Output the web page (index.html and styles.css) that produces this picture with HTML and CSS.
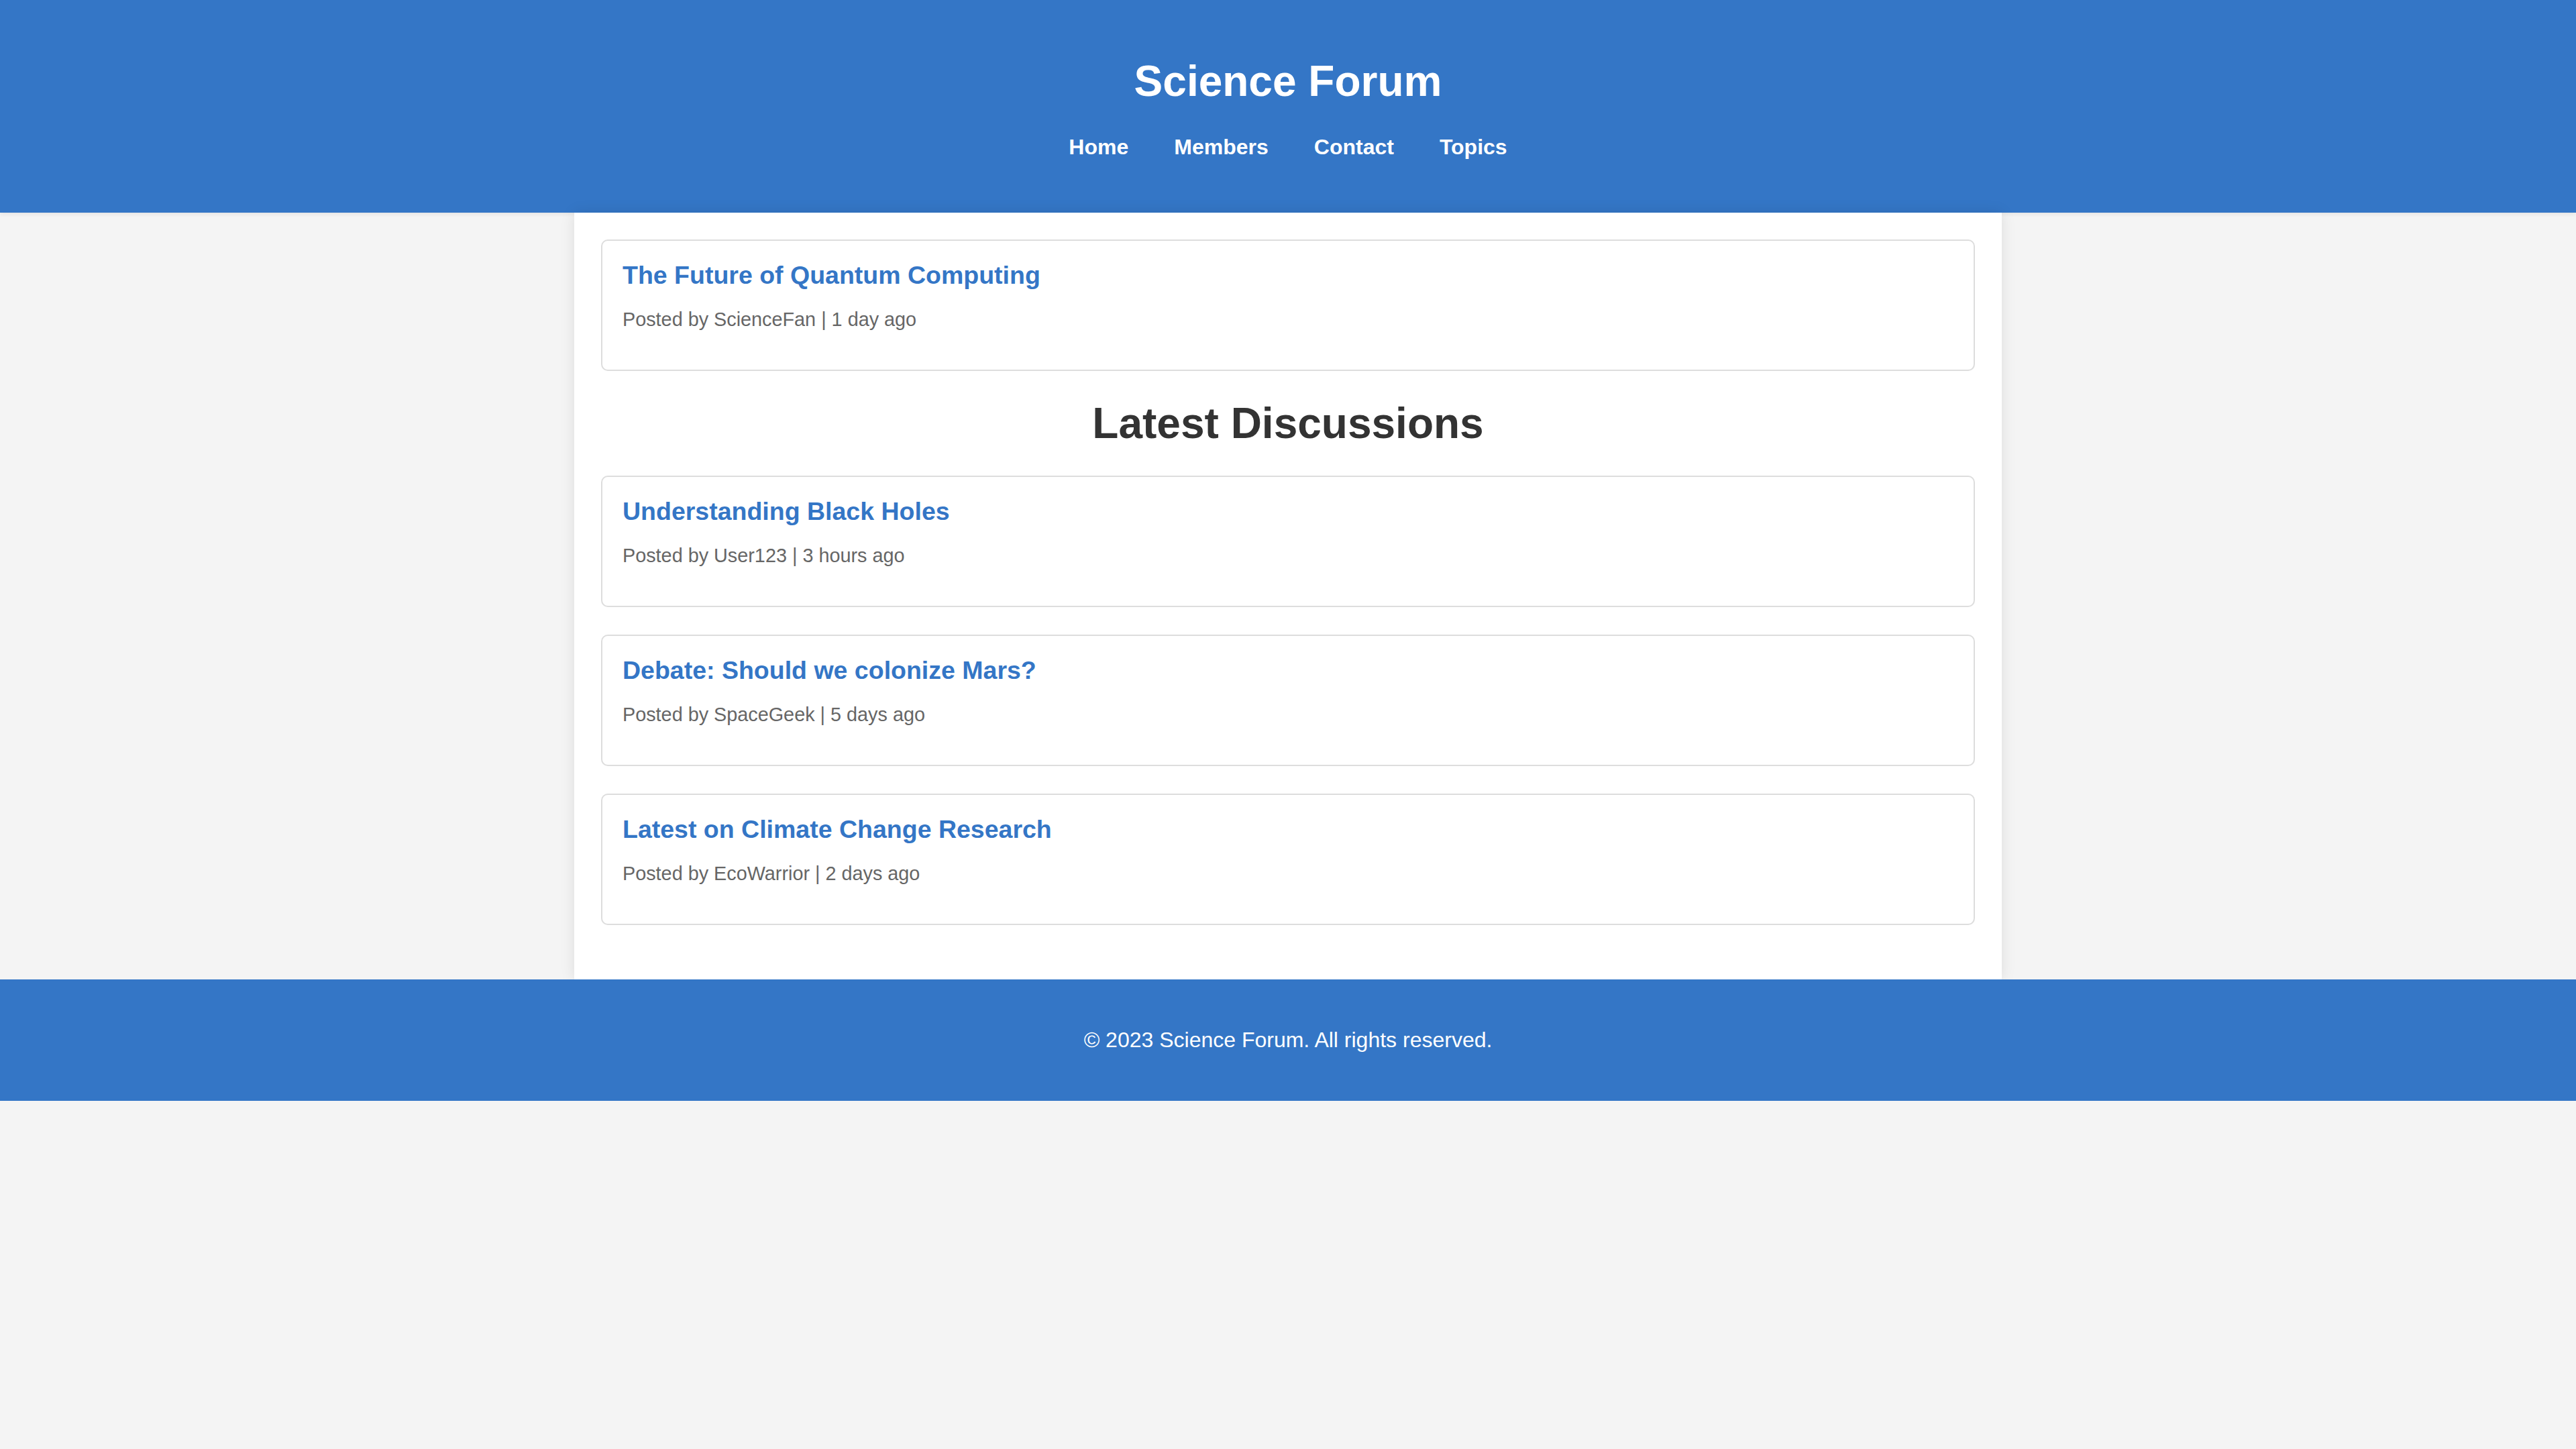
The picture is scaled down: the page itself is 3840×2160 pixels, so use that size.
FILE: index.html
```html
<!DOCTYPE html>
<html lang="en">
<head>
<meta charset="utf-8">
<title>Science Forum</title>
<link rel="stylesheet" href="styles.css">
</head>
<body>
<header class="site-header">
  <h1 class="site-title">Science Forum</h1>
  <nav class="site-nav">
    <a href="#">Home</a>
    <a href="#">Members</a>
    <a href="#">Contact</a>
    <a href="#">Topics</a>
  </nav>
</header>
<main class="container">
  <article class="post">
    <h3 class="post-title"><a href="#">The Future of Quantum Computing</a></h3>
    <p class="post-meta">Posted by ScienceFan | 1 day ago</p>
  </article>
  <h2 class="section-title">Latest Discussions</h2>
  <article class="post">
    <h3 class="post-title"><a href="#">Understanding Black Holes</a></h3>
    <p class="post-meta">Posted by User123 | 3 hours ago</p>
  </article>
  <article class="post">
    <h3 class="post-title"><a href="#">Debate: Should we colonize Mars?</a></h3>
    <p class="post-meta">Posted by SpaceGeek | 5 days ago</p>
  </article>
  <article class="post">
    <h3 class="post-title"><a href="#">Latest on Climate Change Research</a></h3>
    <p class="post-meta">Posted by EcoWarrior | 2 days ago</p>
  </article>
</main>
<footer class="site-footer">
  <p class="footer-text">&copy; 2023 Science Forum. All rights reserved.</p>
</footer>
</body>
</html>
```
FILE: styles.css
```css
html, body {
  margin: 0;
  padding: 0;
}
body {
  background: #f4f4f4;
  font-family: "Liberation Sans", Arial, sans-serif;
  color: #333;
}
.site-header {
  background: #3476c6;
  color: #fff;
  text-align: center;
  padding: 41px 0 79px;
  box-shadow: 0 2px 6px rgba(0, 0, 0, 0.08);
}
.site-title {
  font-size: 64px;
  line-height: 74px;
  font-weight: bold;
  margin: 43px 0 43px;
}
.site-nav {
  display: flex;
  justify-content: center;
  gap: 68px;
  font-size: 32px;
  line-height: 37px;
}
.site-nav a {
  color: #fff;
  font-weight: bold;
  text-decoration: none;
}
.container {
  width: 2048px;
  margin: 0 auto;
  padding: 40px;
  background: #fff;
  box-shadow: 0 0 20px rgba(0, 0, 0, 0.1);
}
.post {
  border: 2px solid #ddd;
  border-radius: 10px;
  padding: 30px;
  margin-bottom: 41px;
}
.post-title {
  margin: 0;
  font-size: 37.5px;
  line-height: 43px;
  font-weight: bold;
}
.post-title a {
  color: #3476c6;
  text-decoration: none;
}
.post-meta {
  margin: 28px 0 29px;
  font-size: 28.8px;
  line-height: 32px;
  color: #666;
}
.section-title {
  text-align: center;
  font-size: 64px;
  line-height: 74px;
  font-weight: bold;
  color: #333;
  margin: 41px 0;
}
.site-footer {
  background: #3476c6;
  color: #fff;
  text-align: center;
  padding: 40px 0;
}
.footer-text {
  margin: 32px 0;
  font-size: 32px;
  line-height: 37px;
}
```
